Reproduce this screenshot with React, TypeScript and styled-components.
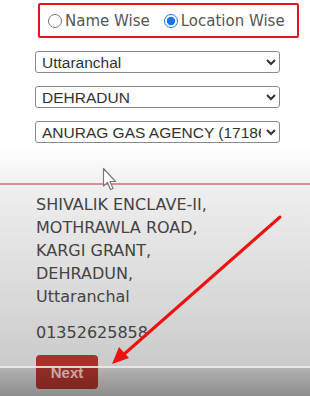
import * as React from "react";
import styled, { createGlobalStyle } from "styled-components";

const GlobalStyle = createGlobalStyle`
    html, body {
        margin: 0;
        padding: 0;
        background: #ffffff;
    }
`;

const Page = styled.div`
    position: relative;
    width: 310px;
    height: 396px;
    overflow: hidden;
    display: flex;
    flex-direction: column;
    font-family: "DejaVu Sans", Verdana, sans-serif;
`;

const TopSection = styled.div`
    height: 183px;
    display: flex;
    flex-direction: column;
    padding: 3px 0 0 35px;
    box-sizing: border-box;
    background: linear-gradient(to bottom, #ffffff 0, #ffffff 148px, #f1f1f1 100%);
`;

const RadioBox = styled.div`
    display: flex;
    align-items: center;
    gap: 14px;
    width: 261px;
    height: 35px;
    margin-left: 3px;
    padding-left: 8px;
    box-sizing: border-box;
    border: 2px solid #e8141c;
    border-radius: 2px;
`;

const RadioLabel = styled.label`
    display: flex;
    align-items: center;
    gap: 3px;
    font-size: 15px;
    color: #555555;
    cursor: default;

    input {
        width: 14px;
        height: 14px;
        margin: 0;
        accent-color: #1a73e8;
    }
`;

const SelectStack = styled.div`
    display: flex;
    flex-direction: column;
    gap: 13px;
    margin-top: 13px;
`;

const Select = styled.select`
    width: 245px;
    height: 22px;
    padding: 0 2px;
    font-family: "Liberation Sans", Arial, sans-serif;
    font-size: 15.5px;
    color: #333333;
    background: #ffffff;
    border: 1px solid #8a8a8a;
    border-radius: 3px;
`;

const Divider = styled.div`
    height: 2px;
    background: #dc8f93;
`;

const Details = styled.div`
    flex: 1;
    display: flex;
    flex-direction: column;
    align-items: flex-start;
    padding: 8px 0 0 36px;
    background: linear-gradient(to bottom, #efefef 0, #d2d2d2 70%, #c4c4c4 100%);
`;

const Address = styled.div`
    font-size: 16px;
    line-height: 23px;
    color: #444444;
`;

const Phone = styled.div`
    margin-top: 13px;
    font-size: 16px;
    line-height: 23px;
    color: #444444;
`;

const NextButton = styled.button`
    margin-top: 11px;
    width: 62px;
    height: 34px;
    font-family: "Liberation Sans", Arial, sans-serif;
    font-weight: bold;
    font-size: 15px;
    color: #e9c6c2;
    background: #a8322b;
    border: none;
    border-radius: 4px;
`;

const PlayerBar = styled.div`
    position: absolute;
    left: 0;
    right: 0;
    bottom: 0;
    height: 28px;
    border-top: 2px solid rgba(245, 245, 245, 0.85);
    background: linear-gradient(to bottom, rgba(0, 0, 0, 0.12), rgba(0, 0, 0, 0.28));
`;

const Overlay = styled.svg`
    position: absolute;
    left: 0;
    top: 0;
    pointer-events: none;
`;

export default function App() {
    return (
        <>
            <GlobalStyle />
            <Page>
                <TopSection>
                    <RadioBox>
                        <RadioLabel>
                            <input type="radio" name="mode" />
                            Name Wise
                        </RadioLabel>
                        <RadioLabel>
                            <input type="radio" name="mode" defaultChecked />
                            Location Wise
                        </RadioLabel>
                    </RadioBox>
                    <SelectStack>
                        <Select defaultValue="Uttaranchal">
                            <option>Uttaranchal</option>
                        </Select>
                        <Select defaultValue="DEHRADUN">
                            <option>DEHRADUN</option>
                        </Select>
                        <Select defaultValue="ANURAG GAS AGENCY (17186)">
                            <option>ANURAG GAS AGENCY (17186)</option>
                        </Select>
                    </SelectStack>
                </TopSection>
                <Divider />
                <Details>
                    <Address>
                        SHIVALIK ENCLAVE-II,
                        <br />
                        MOTHRAWLA ROAD,
                        <br />
                        KARGI GRANT,
                        <br />
                        DEHRADUN,
                        <br />
                        Uttaranchal
                    </Address>
                    <Phone>01352625858</Phone>
                    <NextButton>Next</NextButton>
                </Details>
                <PlayerBar />
                <Overlay width="310" height="396" viewBox="0 0 310 396">
                    {/* mouse pointer */}
                    <path
                        d="M103.5 168.5 L103.5 186 L107.5 182.5 L110.5 189.5 L113 188.5 L110 181.5 L115.5 181.5 Z"
                        fill="#ffffff"
                        stroke="#7a7a7a"
                        strokeWidth="1.2"
                        strokeLinejoin="round"
                    />
                    {/* red annotation arrow */}
                    <line x1="280" y1="217" x2="122" y2="356" stroke="#f01010" strokeWidth="3" strokeLinecap="round" />
                    <path d="M112 364 L119 347 L129 358 Z" fill="#f01010" />
                </Overlay>
            </Page>
        </>
    );
}
